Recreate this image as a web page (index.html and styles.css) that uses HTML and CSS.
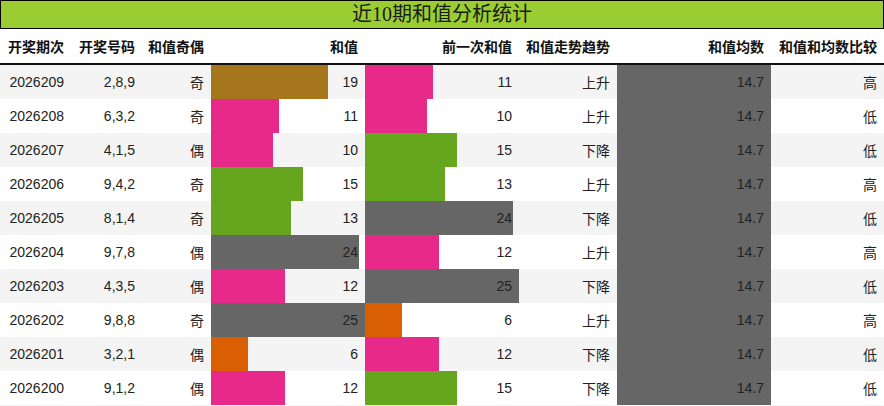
FILE: index.html
```html
<!DOCTYPE html>
<html lang="zh">
<head>
<meta charset="utf-8">
<title>近10期和值分析统计</title>
<link rel="stylesheet" href="styles.css">
</head>
<body>
<div class="title">近10期和值分析统计</div>
<table class="stats">
  <colgroup>
    <col class="c1"><col class="c2"><col class="c3"><col class="c4"><col class="c5"><col class="c6"><col class="c7"><col class="c8">
  </colgroup>
  <thead>
    <tr>
      <th>开奖期次</th><th>开奖号码</th><th>和值奇偶</th><th>和值</th><th>前一次和值</th><th>和值走势趋势</th><th>和值均数</th><th>和值和均数比较</th>
    </tr>
  </thead>
  <tbody>
    <tr>
      <td>2026209</td><td>2,8,9</td><td>奇</td>
      <td class="barcell"><div class="bw"><span class="bar brown" style="width:76%"></span><span class="val">19</span></div></td>
      <td class="barcell"><div class="bw"><span class="bar pink" style="width:44%"></span><span class="val">11</span></div></td>
      <td>上升</td>
      <td class="barcell"><div class="bw"><span class="bar gray" style="width:100%"></span><span class="val">14.7</span></div></td>
      <td>高</td>
    </tr>
    <tr>
      <td>2026208</td><td>6,3,2</td><td>奇</td>
      <td class="barcell"><div class="bw"><span class="bar pink" style="width:44%"></span><span class="val">11</span></div></td>
      <td class="barcell"><div class="bw"><span class="bar pink" style="width:40%"></span><span class="val">10</span></div></td>
      <td>上升</td>
      <td class="barcell"><div class="bw"><span class="bar gray" style="width:100%"></span><span class="val">14.7</span></div></td>
      <td>低</td>
    </tr>
    <tr>
      <td>2026207</td><td>4,1,5</td><td>偶</td>
      <td class="barcell"><div class="bw"><span class="bar pink" style="width:40%"></span><span class="val">10</span></div></td>
      <td class="barcell"><div class="bw"><span class="bar green" style="width:60%"></span><span class="val">15</span></div></td>
      <td>下降</td>
      <td class="barcell"><div class="bw"><span class="bar gray" style="width:100%"></span><span class="val">14.7</span></div></td>
      <td>低</td>
    </tr>
    <tr>
      <td>2026206</td><td>9,4,2</td><td>奇</td>
      <td class="barcell"><div class="bw"><span class="bar green" style="width:60%"></span><span class="val">15</span></div></td>
      <td class="barcell"><div class="bw"><span class="bar green" style="width:52%"></span><span class="val">13</span></div></td>
      <td>上升</td>
      <td class="barcell"><div class="bw"><span class="bar gray" style="width:100%"></span><span class="val">14.7</span></div></td>
      <td>高</td>
    </tr>
    <tr>
      <td>2026205</td><td>8,1,4</td><td>奇</td>
      <td class="barcell"><div class="bw"><span class="bar green" style="width:52%"></span><span class="val">13</span></div></td>
      <td class="barcell"><div class="bw"><span class="bar gray" style="width:96%"></span><span class="val">24</span></div></td>
      <td>下降</td>
      <td class="barcell"><div class="bw"><span class="bar gray" style="width:100%"></span><span class="val">14.7</span></div></td>
      <td>低</td>
    </tr>
    <tr>
      <td>2026204</td><td>9,7,8</td><td>偶</td>
      <td class="barcell"><div class="bw"><span class="bar gray" style="width:96%"></span><span class="val">24</span></div></td>
      <td class="barcell"><div class="bw"><span class="bar pink" style="width:48%"></span><span class="val">12</span></div></td>
      <td>上升</td>
      <td class="barcell"><div class="bw"><span class="bar gray" style="width:100%"></span><span class="val">14.7</span></div></td>
      <td>高</td>
    </tr>
    <tr>
      <td>2026203</td><td>4,3,5</td><td>偶</td>
      <td class="barcell"><div class="bw"><span class="bar pink" style="width:48%"></span><span class="val">12</span></div></td>
      <td class="barcell"><div class="bw"><span class="bar gray" style="width:100%"></span><span class="val">25</span></div></td>
      <td>下降</td>
      <td class="barcell"><div class="bw"><span class="bar gray" style="width:100%"></span><span class="val">14.7</span></div></td>
      <td>低</td>
    </tr>
    <tr>
      <td>2026202</td><td>9,8,8</td><td>奇</td>
      <td class="barcell"><div class="bw"><span class="bar gray" style="width:100%"></span><span class="val">25</span></div></td>
      <td class="barcell"><div class="bw"><span class="bar orange" style="width:24%"></span><span class="val">6</span></div></td>
      <td>上升</td>
      <td class="barcell"><div class="bw"><span class="bar gray" style="width:100%"></span><span class="val">14.7</span></div></td>
      <td>高</td>
    </tr>
    <tr>
      <td>2026201</td><td>3,2,1</td><td>偶</td>
      <td class="barcell"><div class="bw"><span class="bar orange" style="width:24%"></span><span class="val">6</span></div></td>
      <td class="barcell"><div class="bw"><span class="bar pink" style="width:48%"></span><span class="val">12</span></div></td>
      <td>下降</td>
      <td class="barcell"><div class="bw"><span class="bar gray" style="width:100%"></span><span class="val">14.7</span></div></td>
      <td>低</td>
    </tr>
    <tr>
      <td>2026200</td><td>9,1,2</td><td>偶</td>
      <td class="barcell"><div class="bw"><span class="bar pink" style="width:48%"></span><span class="val">12</span></div></td>
      <td class="barcell"><div class="bw"><span class="bar green" style="width:60%"></span><span class="val">15</span></div></td>
      <td>下降</td>
      <td class="barcell"><div class="bw"><span class="bar gray" style="width:100%"></span><span class="val">14.7</span></div></td>
      <td>低</td>
    </tr>
  </tbody>
</table>
</body>
</html>
```
FILE: styles.css
```css
html, body {
  margin: 0;
  padding: 0;
  background: #ffffff;
}
body {
  width: 884px;
  font-family: "Liberation Sans", "Noto Sans CJK SC", sans-serif;
  color: #222222;
}
.title {
  box-sizing: border-box;
  height: 29px;
  border: 1px solid #000000;
  background: #9acd32;
  text-align: center;
  font-family: "Liberation Serif", "Noto Sans CJK SC", serif;
  font-size: 20px;
  line-height: 27px;
  color: #1a1a1a;
}
.stats {
  width: 884px;
  table-layout: fixed;
  border-collapse: collapse;
  border-spacing: 0;
  font-size: 14px;
  border-bottom: 1px solid #f4f4f4;
}
.c1 { width: 71px; }
.c2 { width: 71px; }
.c3 { width: 69px; }
.c4 { width: 154px; }
.c5 { width: 154px; }
.c6 { width: 98px; }
.c7 { width: 154px; }
.c8 { width: 113px; }
.stats th {
  height: 34px;
  padding: 0 7px 0 0;
  text-align: right;
  font-weight: bold;
  color: #111111;
  white-space: nowrap;
  border-bottom: 2px solid #111111;
}
.stats td {
  height: 34px;
  padding: 0 7px 0 0;
  text-align: right;
  white-space: nowrap;
}
.stats tbody tr:nth-child(odd) {
  background: #f4f4f4;
}
.stats td.barcell {
  padding: 0;
}
.bw {
  display: grid;
  height: 34px;
  align-items: center;
}
.bar {
  grid-area: 1 / 1;
  justify-self: start;
  height: 34px;
}
.val {
  grid-area: 1 / 1;
  justify-self: end;
  padding-right: 7px;
}
.brown { background: #a6761d; }
.pink { background: #e7298a; }
.green { background: #66a61e; }
.gray { background: #666666; }
.orange { background: #d95f02; }
```
